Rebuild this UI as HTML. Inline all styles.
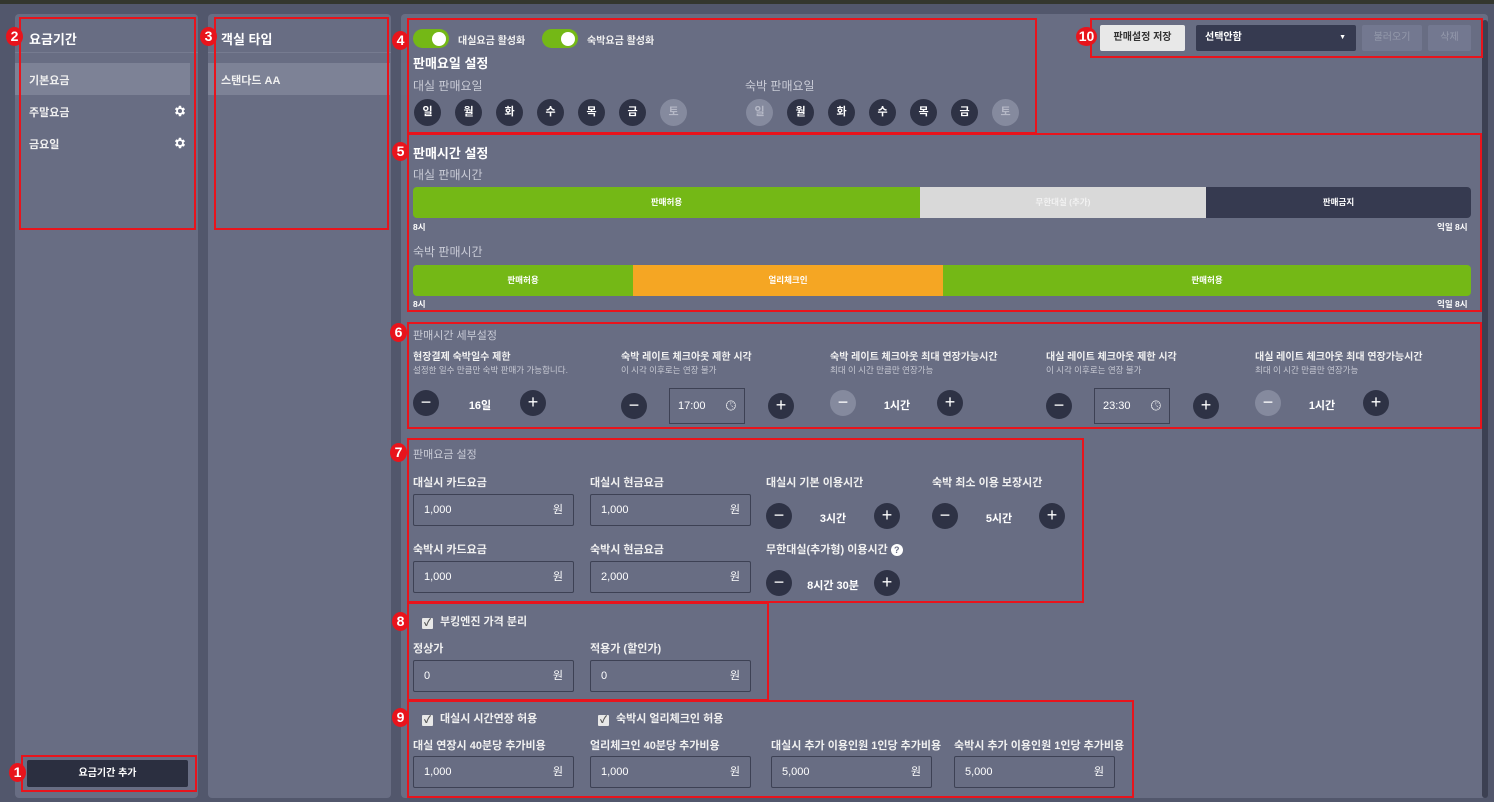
<!DOCTYPE html>
<html><head><meta charset="utf-8">
<style>
*{box-sizing:border-box;margin:0;padding:0}
body{width:1494px;height:802px;background:#52576c;font-family:"Liberation Sans","Noto Sans CJK KR",sans-serif;color:#fff;position:relative;overflow:hidden;font-size:11px}
.a{position:absolute}
.panel{position:absolute;background:#686d83;border-radius:4px}
.rb{position:absolute;border:2px solid #e8141c}
.n{position:absolute;width:17px;height:19px;border-radius:50%;background:#e8141c;color:#fff;font-size:14px;font-weight:bold;text-align:center;line-height:19px;z-index:5}
.h{font-size:13px;font-weight:bold}
.lbl{font-size:11px;font-weight:bold;color:#f0f0f0}
.sub{font-size:8.5px;color:#c8cad4}
.gl{font-size:12px;color:#c9cbd6}
.c{position:absolute;width:27px;height:27px;border-radius:50%;background:#2e3245;color:#fff;font-size:11px;font-weight:bold;text-align:center;line-height:27px}
.c.d{background:#858a9e;color:#b5b8c6}
.pm{position:absolute;width:26px;height:26px;border-radius:50%;background:#2e3245;color:#fff;font-size:18px;text-align:center;line-height:25px}
.pm.d{background:#858a9e}
.inp{position:absolute;height:32px;width:161px;border:1px solid #3d4154;background:#686d83;border-radius:2px;font-size:11px;padding-left:10px;line-height:30px}
.inp span{position:absolute;right:10px;top:0}
.tg{position:absolute;width:36px;height:19px;border-radius:10px;background:#74b816}
.tg i{position:absolute;right:3px;top:2.5px;width:14px;height:14px;border-radius:50%;background:#fff}
.bar{position:absolute;height:31px;font-size:8.5px;font-weight:bold;text-align:center;line-height:31px}
.cb{display:inline-block;width:11px;height:11px;background:#e8e8e8;border-radius:1px;color:#555;font-size:10px;line-height:11px;text-align:center;vertical-align:-1px;margin-right:7px}
.val{position:absolute;font-size:11px;font-weight:bold;text-align:center}
</style></head><body>
<div class="a" style="left:0;top:0;width:1494px;height:4px;background:#34372f"></div>

<div class="panel" style="left:15px;top:14px;width:183px;height:784px"></div>
<div class="panel" style="left:208px;top:14px;width:183px;height:784px"></div>
<div class="panel" style="left:401px;top:14px;width:1087px;height:784px"></div>
<div class="a" style="left:1482px;top:20px;width:6px;height:778px;background:#3c4052;border-radius:3px"></div>

<!-- left -->
<div class="a h" style="left:29px;top:29px">요금기간</div>
<div class="a" style="left:15px;top:52px;width:183px;height:1px;background:#767b90"></div>
<div class="a" style="left:15px;top:63px;width:175px;height:32px;background:#7d8296"></div>
<div class="a lbl" style="left:29px;top:72px">기본요금</div>
<div class="a lbl" style="left:29px;top:104px">주말요금</div>
<div class="a lbl" style="left:29px;top:136px">금요일</div>
<svg class="a" style="left:173px;top:104px" width="14" height="14" viewBox="0 0 24 24"><path fill="#fff" d="M19.4 13a7.5 7.5 0 000-2l2.1-1.6-2-3.5-2.5 1a7.6 7.6 0 00-1.7-1L15 3h-4l-.4 2.7a7.6 7.6 0 00-1.7 1l-2.5-1-2 3.5L6.6 11a7.5 7.5 0 000 2l-2.1 1.6 2 3.5 2.5-1a7.6 7.6 0 001.7 1L11 21h4l.4-2.7a7.6 7.6 0 001.7-1l2.5 1 2-3.5zM13 15.5a3.5 3.5 0 110-7 3.5 3.5 0 010 7z" transform="translate(-1 0)"/></svg>
<svg class="a" style="left:173px;top:136px" width="14" height="14" viewBox="0 0 24 24"><path fill="#fff" d="M19.4 13a7.5 7.5 0 000-2l2.1-1.6-2-3.5-2.5 1a7.6 7.6 0 00-1.7-1L15 3h-4l-.4 2.7a7.6 7.6 0 00-1.7 1l-2.5-1-2 3.5L6.6 11a7.5 7.5 0 000 2l-2.1 1.6 2 3.5 2.5-1a7.6 7.6 0 001.7 1L11 21h4l.4-2.7a7.6 7.6 0 001.7-1l2.5 1 2-3.5zM13 15.5a3.5 3.5 0 110-7 3.5 3.5 0 010 7z" transform="translate(-1 0)"/></svg>
<div class="a" style="left:27px;top:760px;width:161px;height:27px;background:#2b2f40;border-radius:2px;text-align:center;line-height:27px;font-size:10px;font-weight:bold">요금기간 추가</div>

<div class="a h" style="left:221px;top:29px">객실 타입</div>
<div class="a" style="left:208px;top:52px;width:183px;height:1px;background:#767b90"></div>
<div class="a" style="left:208px;top:63px;width:182px;height:32px;background:#7d8296"></div>
<div class="a lbl" style="left:221px;top:72px">스탠다드 AA</div>

<!-- section 4 -->
<div class="tg" style="left:413px;top:29px"><i></i></div>
<div class="a lbl" style="left:458px;top:32px;font-size:10px">대실요금 활성화</div>
<div class="tg" style="left:542px;top:29px"><i></i></div>
<div class="a lbl" style="left:587px;top:32px;font-size:10px">숙박요금 활성화</div>
<div class="a h" style="left:413px;top:53px">판매요일 설정</div>
<div class="a gl" style="left:413px;top:77px">대실 판매요일</div>
<div class="a gl" style="left:745px;top:77px">숙박 판매요일</div>
<div class="c" style="left:414px;top:99px">일</div><div class="c" style="left:455px;top:99px">월</div><div class="c" style="left:496px;top:99px">화</div><div class="c" style="left:537px;top:99px">수</div><div class="c" style="left:578px;top:99px">목</div><div class="c" style="left:619px;top:99px">금</div><div class="c d" style="left:660px;top:99px">토</div>
<div class="c d" style="left:746px;top:99px">일</div><div class="c" style="left:787px;top:99px">월</div><div class="c" style="left:828px;top:99px">화</div><div class="c" style="left:869px;top:99px">수</div><div class="c" style="left:910px;top:99px">목</div><div class="c" style="left:951px;top:99px">금</div><div class="c d" style="left:992px;top:99px">토</div>

<!-- top right -->
<div class="a" style="left:1100px;top:25px;width:85px;height:26px;background:#e8e8e8;border-radius:2px;color:#333;font-size:10px;font-weight:bold;text-align:center;line-height:26px">판매설정 저장</div>
<div class="a" style="left:1196px;top:25px;width:160px;height:26px;background:#363a50;border-radius:2px;font-size:10px;font-weight:bold;padding-left:9px;line-height:26px">선택안함<span style="position:absolute;right:10px;top:0;font-size:7px">▼</span></div>
<div class="a" style="left:1362px;top:25px;width:60px;height:26px;background:#737890;border-radius:2px;color:#959aac;font-size:10px;text-align:center;line-height:26px">불러오기</div>
<div class="a" style="left:1428px;top:25px;width:43px;height:26px;background:#737890;border-radius:2px;color:#959aac;font-size:10px;text-align:center;line-height:26px">삭제</div>

<!-- section 5 -->
<div class="a h" style="left:413px;top:143px">판매시간 설정</div>
<div class="a gl" style="left:413px;top:166px">대실 판매시간</div>
<div class="bar" style="left:413px;top:187px;width:507px;background:#74b816;border-radius:4px 0 0 4px">판매허용</div>
<div class="bar" style="left:920px;top:187px;width:286px;background:#d9d9d9;color:#f2f2f2">무한대실 (추가)</div>
<div class="bar" style="left:1206px;top:187px;width:265px;background:#363a50;border-radius:0 4px 4px 0">판매금지</div>
<div class="a" style="left:413px;top:221px;font-size:8.5px;font-weight:bold">8시</div>
<div class="a" style="left:1437px;top:221px;font-size:8.5px;font-weight:bold">익일 8시</div>
<div class="a gl" style="left:413px;top:243px">숙박 판매시간</div>
<div class="bar" style="left:413px;top:265px;width:220px;background:#74b816;border-radius:4px 0 0 4px">판매허용</div>
<div class="bar" style="left:633px;top:265px;width:310px;background:#f5a623">얼리체크인</div>
<div class="bar" style="left:943px;top:265px;width:528px;background:#74b816;border-radius:0 4px 4px 0">판매허용</div>
<div class="a" style="left:413px;top:298px;font-size:8.5px;font-weight:bold">8시</div>
<div class="a" style="left:1437px;top:298px;font-size:8.5px;font-weight:bold">익일 8시</div>

<!-- section 6 -->
<div class="a gl" style="left:413px;top:327px;font-size:11px">판매시간 세부설정</div>
<div class="a lbl" style="left:413px;top:348px;font-size:10px">현장결제 숙박일수 제한</div>
<div class="a sub" style="left:413px;top:364px">설정한 일수 만큼만 숙박 판매가 가능합니다.</div>
<div class="pm" style="left:413px;top:390px">−</div><div class="val" style="left:440px;top:397px;width:80px">16일</div><div class="pm" style="left:520px;top:390px">+</div>

<div class="a lbl" style="left:621px;top:348px;font-size:10px">숙박 레이트 체크아웃 제한 시각</div>
<div class="a sub" style="left:621px;top:364px">이 시각 이후로는 연장 불가</div>
<div class="pm" style="left:621px;top:393px">−</div>
<div class="a" style="left:669px;top:388px;width:76px;height:36px;border:1px solid #3d4154;font-size:11px;padding-left:8px;line-height:34px">17:00<span style="position:absolute;right:8px;font-size:13px">🕓︎</span></div>
<div class="pm" style="left:768px;top:393px">+</div>

<div class="a lbl" style="left:830px;top:348px;font-size:10px">숙박 레이트 체크아웃 최대 연장가능시간</div>
<div class="a sub" style="left:830px;top:364px">최대 이 시간 만큼만 연장가능</div>
<div class="pm d" style="left:830px;top:390px">−</div><div class="val" style="left:857px;top:397px;width:80px">1시간</div><div class="pm" style="left:937px;top:390px">+</div>

<div class="a lbl" style="left:1046px;top:348px;font-size:10px">대실 레이트 체크아웃 제한 시각</div>
<div class="a sub" style="left:1046px;top:364px">이 시각 이후로는 연장 불가</div>
<div class="pm" style="left:1046px;top:393px">−</div>
<div class="a" style="left:1094px;top:388px;width:76px;height:36px;border:1px solid #3d4154;font-size:11px;padding-left:8px;line-height:34px">23:30<span style="position:absolute;right:8px;font-size:13px">🕓︎</span></div>
<div class="pm" style="left:1193px;top:393px">+</div>

<div class="a lbl" style="left:1255px;top:348px;font-size:10px">대실 레이트 체크아웃 최대 연장가능시간</div>
<div class="a sub" style="left:1255px;top:364px">최대 이 시간 만큼만 연장가능</div>
<div class="pm d" style="left:1255px;top:390px">−</div><div class="val" style="left:1282px;top:397px;width:80px">1시간</div><div class="pm" style="left:1363px;top:390px">+</div>

<!-- section 7 -->
<div class="a gl" style="left:413px;top:446px;font-size:11px">판매요금 설정</div>
<div class="a lbl" style="left:413px;top:474px">대실시 카드요금</div>
<div class="a lbl" style="left:590px;top:474px">대실시 현금요금</div>
<div class="a lbl" style="left:766px;top:474px">대실시 기본 이용시간</div>
<div class="a lbl" style="left:932px;top:474px">숙박 최소 이용 보장시간</div>
<div class="inp" style="left:413px;top:494px">1,000<span>원</span></div>
<div class="inp" style="left:590px;top:494px">1,000<span>원</span></div>
<div class="pm" style="left:766px;top:503px">−</div><div class="val" style="left:793px;top:510px;width:80px">3시간</div><div class="pm" style="left:874px;top:503px">+</div>
<div class="pm" style="left:932px;top:503px">−</div><div class="val" style="left:959px;top:510px;width:80px">5시간</div><div class="pm" style="left:1039px;top:503px">+</div>
<div class="a lbl" style="left:413px;top:541px">숙박시 카드요금</div>
<div class="a lbl" style="left:590px;top:541px">숙박시 현금요금</div>
<div class="a lbl" style="left:766px;top:541px">무한대실(추가형) 이용시간 <span style="display:inline-block;width:12px;height:12px;border-radius:50%;background:#fff;color:#686d83;font-size:9px;text-align:center;line-height:12px">?</span></div>
<div class="inp" style="left:413px;top:561px">1,000<span>원</span></div>
<div class="inp" style="left:590px;top:561px">2,000<span>원</span></div>
<div class="pm" style="left:766px;top:570px">−</div><div class="val" style="left:793px;top:577px;width:80px">8시간 30분</div><div class="pm" style="left:874px;top:570px">+</div>

<!-- section 8 -->
<div class="a lbl" style="left:422px;top:613px"><span class="cb">✓</span>부킹엔진 가격 분리</div>
<div class="a lbl" style="left:413px;top:640px">정상가</div>
<div class="a lbl" style="left:590px;top:640px">적용가 (할인가)</div>
<div class="inp" style="left:413px;top:660px">0<span>원</span></div>
<div class="inp" style="left:590px;top:660px">0<span>원</span></div>

<!-- section 9 -->
<div class="a lbl" style="left:422px;top:710px"><span class="cb">✓</span>대실시 시간연장 허용</div>
<div class="a lbl" style="left:598px;top:710px"><span class="cb">✓</span>숙박시 얼리체크인 허용</div>
<div class="a lbl" style="left:413px;top:737px">대실 연장시 40분당 추가비용</div>
<div class="a lbl" style="left:590px;top:737px">얼리체크인 40분당 추가비용</div>
<div class="a lbl" style="left:771px;top:737px">대실시 추가 이용인원 1인당 추가비용</div>
<div class="a lbl" style="left:954px;top:737px">숙박시 추가 이용인원 1인당 추가비용</div>
<div class="inp" style="left:413px;top:756px">1,000<span>원</span></div>
<div class="inp" style="left:590px;top:756px">1,000<span>원</span></div>
<div class="inp" style="left:771px;top:756px">5,000<span>원</span></div>
<div class="inp" style="left:954px;top:756px">5,000<span>원</span></div>

<!-- red boxes -->
<div class="rb" style="left:19px;top:17px;width:177px;height:213px"></div>
<div class="rb" style="left:214px;top:17px;width:175px;height:213px"></div>
<div class="rb" style="left:407px;top:18px;width:630px;height:116px"></div>
<div class="rb" style="left:1090px;top:18px;width:393px;height:40px"></div>
<div class="rb" style="left:407px;top:133px;width:1075px;height:179px"></div>
<div class="rb" style="left:407px;top:322px;width:1075px;height:107px"></div>
<div class="rb" style="left:407px;top:438px;width:677px;height:165px"></div>
<div class="rb" style="left:407px;top:602px;width:362px;height:99px"></div>
<div class="rb" style="left:407px;top:700px;width:727px;height:98px"></div>
<div class="rb" style="left:21px;top:755px;width:176px;height:37px"></div>

<div class="n" style="left:6px;top:27px">2</div>
<div class="n" style="left:200px;top:27px">3</div>
<div class="n" style="left:392px;top:31px">4</div>
<div class="n" style="left:1076px;top:27px;width:21px">10</div>
<div class="n" style="left:392px;top:142px">5</div>
<div class="n" style="left:390px;top:323px">6</div>
<div class="n" style="left:390px;top:443px">7</div>
<div class="n" style="left:392px;top:612px">8</div>
<div class="n" style="left:392px;top:708px">9</div>
<div class="n" style="left:9px;top:763px">1</div>
</body></html>
